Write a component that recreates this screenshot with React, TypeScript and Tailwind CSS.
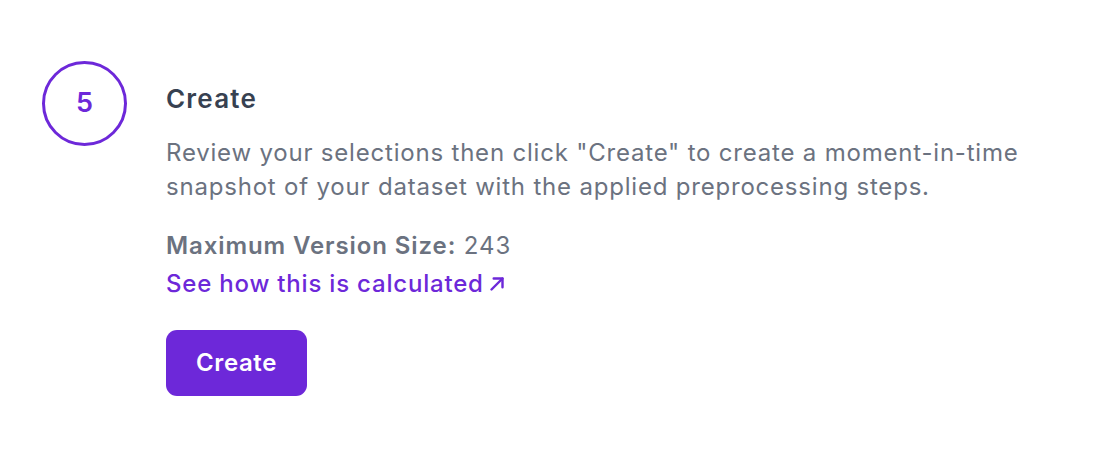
export default function App() {
  return (
    <div className="min-h-[462px] w-full bg-white" style={{ fontFamily: "Inter, 'Noto Sans', sans-serif" }}>
      <div className="flex gap-[39px] pl-[42px] pt-[61px]">
        {/* Step number */}
        <div className="flex h-[85px] w-[85px] shrink-0 items-center justify-center rounded-full border-[3px] border-[#6d28d9]">
          <span className="text-[27px] font-semibold text-[#6d28d9]">5</span>
        </div>

        {/* Step content */}
        <div className="flex flex-col pt-[20px]">
          <h2 className="text-[26px] font-semibold leading-[36px] tracking-[1.2px] text-[#374151]">Create</h2>
          <p className="mt-[19px] text-[24px] leading-[34px] tracking-[0.8px] text-[#6b7280]">
            Review your selections then click "Create" to create a moment-in-time
            <br />
            snapshot of your dataset with the applied preprocessing steps.
          </p>
          <div className="mt-[23px] text-[24px] leading-[38px] tracking-[0.9px] text-[#6b7280]">
            <span className="font-semibold">Maximum Version Size:</span> 243
          </div>
          <a href="#" className="flex items-center text-[24px] font-medium leading-[38px] tracking-[0.8px] text-[#6d28d9]">
            See how this is calculated
            <svg width="22" height="22" viewBox="0 0 20 20" fill="none" stroke="currentColor" strokeWidth="2.2" strokeLinecap="round" strokeLinejoin="round" className="ml-[2px]">
              <path d="M5 15L15 5" />
              <path d="M7 5h8v8" />
            </svg>
          </a>
          <div className="mt-[27px]">
            <button className="h-[66px] w-[141px] rounded-[11px] bg-[#6d28d9] text-[24px] font-semibold tracking-[0.6px] text-white">
              Create
            </button>
          </div>
        </div>
      </div>
    </div>
  );
}
